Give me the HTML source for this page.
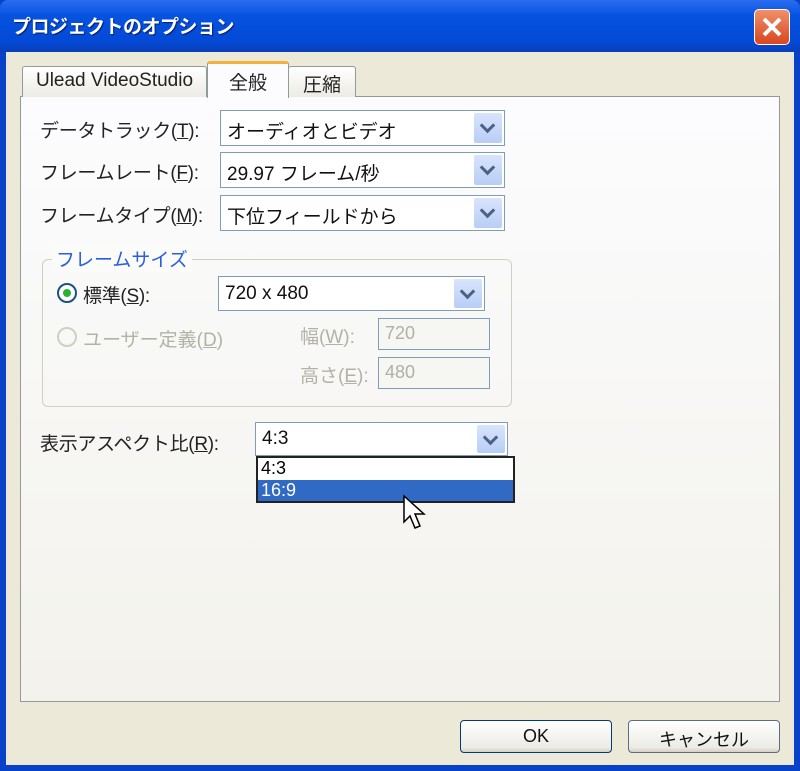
<!DOCTYPE html><html><head><meta charset="utf-8"><style>
body{margin:0;width:800px;height:771px;overflow:hidden;background:#0842c8;font-family:"Liberation Sans","Noto Sans CJK JP",sans-serif;}
.a{position:absolute}
#title{left:0;top:0;width:800px;height:52px;background:linear-gradient(#2a6cf0,#0653e0 30%,#0349d6 80%,#0a3fb8);border-radius:8px 8px 0 0}
#tt{left:12px;top:12px;color:#fff;font-size:19px;font-weight:bold;text-shadow:1px 1px 1px #0a1d6b;letter-spacing:-0.5px}
#close{left:754px;top:9px;width:36px;height:36px;border:1px solid #fff;border-radius:5px;background:linear-gradient(#f0906a,#d8461f);box-sizing:border-box}
#body{left:6px;top:52px;width:788px;height:713px;background:#ece9d8}
#panel{left:20px;top:96px;width:758px;height:604px;background:linear-gradient(#fcfcfe,#f3f2ec);border:1px solid #919b9c}
.tab{top:66px;height:31px;border:1px solid #919b9c;border-bottom:none;background:linear-gradient(#fff,#ecebe5);border-radius:3px 3px 0 0;font-size:19px;color:#222;box-sizing:border-box;padding-top:3px;text-align:center}
.lab{font-size:19px;color:#222;letter-spacing:-0.3px}
.cb{border:1px solid #7f9db9;background:#fff;box-sizing:border-box;font-size:19px;color:#111;padding:6px 0 0 6px}
.cb i{position:absolute;right:2px;top:2px;bottom:2px;width:28px;background:linear-gradient(#d8e4fc,#b8cef6);border-radius:2px}
.cb i:after{content:"";position:absolute;left:8px;top:7px;width:8px;height:8px;border-right:3px solid #4d6185;border-bottom:3px solid #4d6185;transform:rotate(45deg)}
.tb{border:1px solid #7f9db9;box-sizing:border-box;font-size:18px;color:#b0b0a8;padding:4px 0 0 6px;background:#f6f6f2}
.dis{color:#b3b2a8;font-size:19px}
.btn{top:720px;width:152px;height:33px;border:1px solid #003c74;border-radius:4px;background:linear-gradient(#fff,#ecebe6 85%,#d6d0c5);box-sizing:border-box;text-align:center;font-size:18px;padding-top:5px;color:#111}
</style></head><body>
<div id="title" class="a"></div>
<div id="tt" class="a">プロジェクトのオプション</div>
<div id="close" class="a"><svg width="34" height="34" style="position:absolute;left:0;top:0"><path d="M9 9L25 25M25 9L9 25" stroke="#fff" stroke-width="4"/></svg></div>
<div id="body" class="a"></div>
<div id="panel" class="a"></div>
<div class="a tab" style="left:22px;width:185px">Ulead VideoStudio</div>
<div class="a tab" style="left:288px;width:68px">圧縮</div>
<div class="a tab" style="left:207px;top:61px;height:37px;width:82px;background:#fcfcfe;border-top:3px solid #f4b03c;padding-top:4px">全般</div>
<div class="a lab" style="left:40px;top:116px">データトラック(<u>T</u>):</div>
<div class="a lab" style="left:40px;top:158px">フレームレート(<u>F</u>):</div>
<div class="a lab" style="left:40px;top:201px">フレームタイプ(<u>M</u>):</div>
<div class="a cb" style="left:220px;top:110px;width:285px;height:36px">オーディオとビデオ<i></i></div>
<div class="a cb" style="left:220px;top:152px;width:285px;height:36px">29.97 フレーム/秒<i></i></div>
<div class="a cb" style="left:220px;top:195px;width:285px;height:36px">下位フィールドから<i></i></div>
<div class="a" style="left:42px;top:259px;width:470px;height:148px;border:1px solid #d0d0bf;border-radius:6px;box-sizing:border-box"></div>
<div class="a" style="left:52px;top:245px;padding:0 4px;background:#fbfbfa;color:#2a5ee0;font-size:19px">フレームサイズ</div>
<div class="a" style="left:57px;top:283px;width:20px;height:20px;border:2px solid #1c5180;border-radius:50%;background:#fff;box-sizing:border-box"><div class="a" style="left:4px;top:4px;width:8px;height:8px;border-radius:50%;background:#2bb030"></div></div>
<div class="a lab" style="left:83px;top:281px">標準(<u>S</u>):</div>
<div class="a cb" style="left:218px;top:276px;width:267px;height:35px">720 x 480<i></i></div>
<div class="a" style="left:57px;top:327px;width:20px;height:20px;border:2px solid #cfcfc4;border-radius:50%;box-sizing:border-box"></div>
<div class="a dis" style="left:83px;top:325px">ユーザー定義(<u>D</u>)</div>
<div class="a dis" style="left:300px;top:322px">幅(<u>W</u>):</div>
<div class="a dis" style="left:300px;top:361px">高さ(<u>E</u>):</div>
<div class="a tb" style="left:378px;top:318px;width:112px;height:32px">720</div>
<div class="a tb" style="left:378px;top:357px;width:112px;height:32px">480</div>
<div class="a lab" style="left:40px;top:429px">表示アスペクト比(<u>R</u>):</div>
<div class="a cb" style="left:255px;top:422px;width:253px;height:34px;padding-top:5px">4:3<i></i></div>
<div class="a" style="left:256px;top:456px;width:259px;height:47px;border:2px solid #222;background:#fff;box-sizing:border-box;font-size:18px">
<div style="height:22px;padding-left:3px">4:3</div>
<div style="height:21px;padding-left:3px;background:#316ac5;color:#fff">16:9</div></div>
<svg class="a" style="left:402px;top:494px" width="30" height="40"><path d="M2 2L2 28L8 22L13 34L18 32L13 20L22 20Z" fill="#fff" stroke="#000" stroke-width="1.5"/></svg>
<div class="a btn" style="left:460px">OK</div>
<div class="a btn" style="left:628px;border-color:#5a6e80">キャンセル</div>
</body></html>
